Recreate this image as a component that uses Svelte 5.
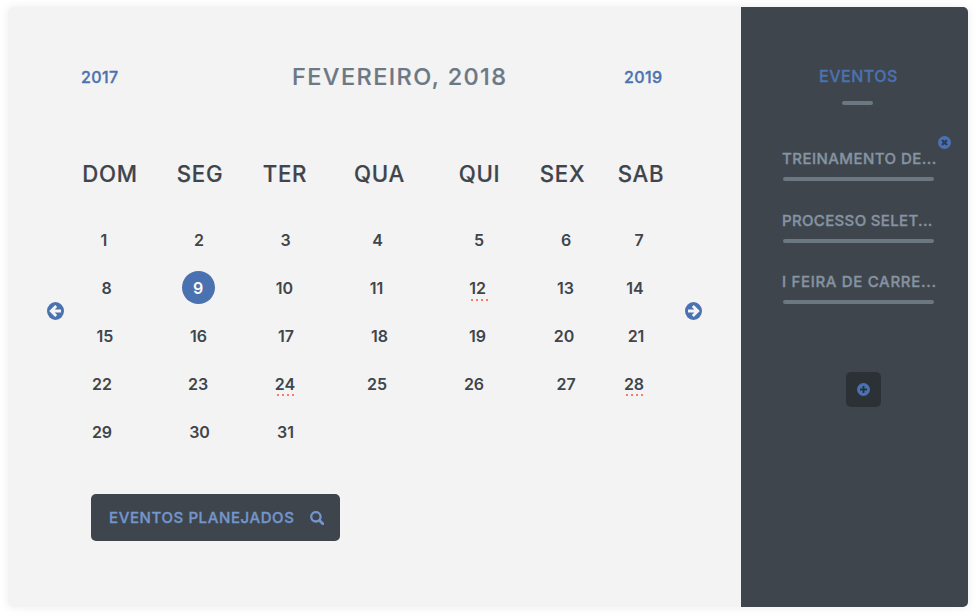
<script>
  const weekdays = ['DOM', 'SEG', 'TER', 'QUA', 'QUI', 'SEX', 'SAB'];
  // horizontal nudge of every day number inside its column
  const shifts = [
    [-6, -1, 0.5, -2, -0.5, 3.5, -2],
    [-3.5, -2, -0.5, -3, -2, 3, -6],
    [-5, -1.5, 1, 0, -2, 1.5, -5],
    [-8, -2, 0, -2.5, -5.5, 3.5, -7],
    [-8, -0.5, 0.5]
  ];
  const selected = 9;
  const marked = [12, 24, 28];
  const days = shifts.flatMap((row, r) => row.map((dx, c) => ({ n: r * 7 + c + 1, dx })));
  const events = [
    { title: 'TREINAMENTO DE...', spacing: 0.45, closable: true },
    { title: 'PROCESSO SELET...', spacing: 0.34 },
    { title: 'I FEIRA DE CARRE...', spacing: 0.68 }
  ];
</script>

<div class="card">
  <main>
    <header>
      <a class="year">2017</a>
      <h1>FEVEREIRO, 2018</h1>
      <a class="year next">2019</a>
    </header>

    <div class="weekdays cols">
      {#each weekdays as d}<span>{d}</span>{/each}
    </div>

    <div class="body">
      <svg class="arrow" viewBox="0 0 17 18" width="17" height="18">
        <ellipse cx="8.5" cy="9" rx="8.5" ry="9" fill="#4a72b0" />
        <path d="M9.2 4 4.2 9 9.2 14M4.5 9H14" fill="none" stroke="#f3f3f3" stroke-width="2.8" />
      </svg>
      <div class="days cols">
        {#each days as { n, dx }}
          <div class="cell">
            <span class="day" class:selected={n === selected} style="transform: translateX({dx}px)">
              <b>{n}</b>
              {#if marked.includes(n)}<i class:low={n === 12}></i>{/if}
            </span>
          </div>
        {/each}
      </div>
      <svg class="arrow" viewBox="0 0 17 18" width="17" height="18">
        <ellipse cx="8.5" cy="9" rx="8.5" ry="9" fill="#4a72b0" />
        <path d="M7.8 4 12.8 9 7.8 14M12.5 9H3" fill="none" stroke="#f3f3f3" stroke-width="2.8" />
      </svg>
    </div>

    <button class="planned">
      <span>EVENTOS PLANEJADOS</span>
      <svg viewBox="0 0 14 14" width="14" height="14">
        <circle cx="5.9" cy="5.8" r="4.7" fill="none" stroke="#7396ce" stroke-width="2.3" />
        <path d="M9.3 9.3 12.8 12.8" stroke="#7396ce" stroke-width="2.8" stroke-linecap="round" />
      </svg>
    </button>
  </main>

  <aside>
    <h2>EVENTOS</h2>
    <div class="rule"></div>
    <ul>
      {#each events as e}
        <li>
          <span style="letter-spacing: {e.spacing}px">{e.title}</span>
          <div class="line"></div>
          {#if e.closable}
            <svg class="close" viewBox="0 0 13 13" width="13" height="13">
              <circle cx="6.5" cy="6.5" r="6.5" fill="#4a72b0" />
              <path d="m4 4 5 5M9 4 4 9" stroke="#303d51" stroke-width="2.2" />
            </svg>
          {/if}
        </li>
      {/each}
    </ul>
    <button class="add" aria-label="Adicionar">
      <svg viewBox="0 0 13 13" width="13" height="13">
        <circle cx="6.5" cy="6.5" r="6.5" fill="#4a72b0" />
        <path d="M6.5 3v7M3 6.5h7" stroke="#263043" stroke-width="1.8" />
      </svg>
    </button>
  </aside>
</div>

<style>
  :global(body) { background: #fff; overflow: hidden; }
  .card {
    box-sizing: border-box;
    width: 960px;
    height: 600px;
    margin: 7px 8px 0;
    display: flex;
    border-radius: 5px;
    overflow: hidden;
    background: #f3f3f3;
    box-shadow: 0 0 10px rgba(0, 0, 0, 0.08);
    font-family: Inter, 'Open Sans', sans-serif;
    font-weight: 500;
    color: #3f454c;
  }
  :global(#app) { display: flow-root; height: 616px; overflow: hidden; }
  main { width: 733px; display: flex; flex-direction: column; }
  header {
    display: grid;
    grid-template-columns: 211px 332px 1fr;
    align-items: center;
    margin: 55px 40px 0 73px;
    height: 30px;
  }
  .year, .planned, h2, li { -webkit-text-stroke: 0.35px currentColor; }
  h1, .weekdays { -webkit-text-stroke: 0.2px currentColor; }
  .year { font-size: 16px; color: #4a72b0; letter-spacing: 0.35px; }
  h1 { margin: 0; font-size: 23.5px; line-height: 28px; font-weight: 500; color: #6c7985; letter-spacing: 1.42px; white-space: nowrap; }
  .cols { display: grid; grid-template-columns: 100px 80px 90px 99px 101px 65px 92px; }
  .weekdays { margin: 67px 0 0 52px; height: 30px; line-height: 30px; font-size: 22.2px; letter-spacing: 0.7px; }
  .weekdays span { display: flex; justify-content: center; }
  .body { display: flex; margin: 27px 0 0 39px; height: 240px; flex: none; }
  .arrow { flex: none; margin-top: 86px; }
  .days { margin: 0 -2px 0 -4px; grid-auto-rows: 48px; }
  .cell { display: flex; align-items: center; justify-content: center; }
  .day {
    position: relative;
    display: flex;
    align-items: center;
    justify-content: center;
    width: 33px;
    height: 33px;
    font-size: 16px;
    line-height: 33px;
    letter-spacing: 0;
    white-space: nowrap;
  }
  b { font-weight: 600; }
  .selected { background: #4a72b0; color: #fff8ee; border-radius: 50%; margin-bottom: 2px; }
  .selected b { padding-top: 2px; line-height: 31px; }
  i {
    position: absolute;
    left: 8px;
    top: 26.5px;
    width: 17px;
    height: 2px;
    background: repeating-linear-gradient(90deg, #f77d68 0 2px, transparent 2px 5px);
  }
  i.low { left: 10px; top: 27.5px; }
  button { border: 0; padding: 0; font: inherit; display: flex; align-items: center; border-radius: 5px; }
  .planned {
    margin: 38px 0 0 83px;
    width: 249px;
    height: 47px;
    padding: 0 16px 0 18px;
    justify-content: space-between;
    box-sizing: border-box;
    background: #3f454c;
    color: #7396ce;
    font-size: 15px;
    letter-spacing: 0.6px;
    white-space: nowrap;
  }
  aside {
    width: 227px;
    background: #3f454c;
    display: flex;
    flex-direction: column;
  }
  h2 {
    margin: 59px 0 0 78px;
    height: 20px;
    font-size: 16px;
    line-height: 20px;
    font-weight: 500;
    color: #4a72b0;
    letter-spacing: 0.5px;
  }
  .rule { margin: 15px 0 0 101px; width: 31px; height: 4px; border-radius: 2px; background: #6b7781; }
  ul { list-style: none; margin: 36px 0 0 41px; padding: 0; height: 231px; flex: none; }
  li {
    position: relative;
    height: 61px;
    width: 154px;
    font-size: 15px;
    line-height: 20px;
    color: #8593a2;
    white-space: nowrap;
  }
  li:first-child { height: 62px; }
  li span { display: block; padding-top: 8px; padding-bottom: 8px; }
  .line { margin-left: 1px; width: 151px; height: 4px; border-radius: 2px; background: #6b7781; }
  .close { position: absolute; left: 156px; top: -5px; }
  .add { width: 35px; height: 35px; margin-left: 105px; background: #2c3135; justify-content: center; }
</style>
